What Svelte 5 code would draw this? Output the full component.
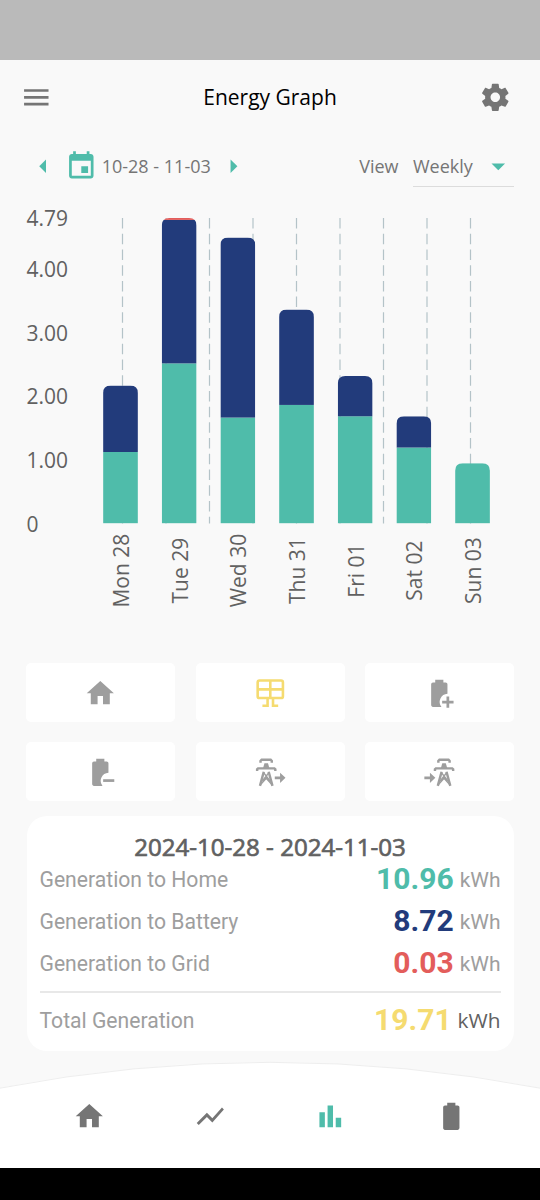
<script>
  const days = [
    { label: "Mon 28", home: 1.12, battery: 1.042, grid: 0 },
    { label: "Tue 29", home: 2.51, battery: 2.25, grid: 0.03 },
    { label: "Wed 30", home: 1.66, battery: 2.823, grid: 0 },
    { label: "Thu 31", home: 1.858, battery: 1.496, grid: 0 },
    { label: "Fri 01", home: 1.68, battery: 0.632, grid: 0 },
    { label: "Sat 02", home: 1.19, battery: 0.49, grid: 0 },
    { label: "Sun 03", home: 0.944, battery: 0, grid: 0 },
  ];

  const ticks = [
    { value: 4.79, label: "4.79" },
    { value: 4, label: "4.00" },
    { value: 3, label: "3.00" },
    { value: 2, label: "2.00" },
    { value: 1, label: "1.00" },
    { value: 0, label: "0" },
  ];

  const gridLines = Array.from({ length: 9 }, (_, i) => 122.5 + i * 43.5);

  const chartTop = 18;
  const chartBase = 323.4;
  const barWidth = 34.8;
  const maxValue = 4.79;

  const y = (value) => chartBase - (value / maxValue) * (chartBase - chartTop);
  const barX = (i) => 103.1 + i * 58.67;

  // stack the non-empty parts of a day from the axis upwards
  function segments(day) {
    let sum = 0;
    return ["home", "battery", "grid"]
      .filter((kind) => day[kind] > 0)
      .map((kind) => {
        const bottom = y(sum);
        sum += day[kind];
        return { kind, top: y(sum), height: bottom - y(sum) };
      });
  }

  const batteryCut =
    "M16.67 4H15V2H9V4H7.33A1.33 1.33 0 0 0 6 5.33V20.67C6 21.4 6.6 22 7.33 22H13.6A6 6 0 0 1 18 12.3V5.33C18 4.6 17.4 4 16.67 4Z";
  const homePath = "M10 20V14H14V20H19V12H22L12 3L2 12H5V20H10Z";

  const tiles = ["home", "solar", "battery-in", "battery-out", "grid-out", "grid-in"];
  let activeTile = $state("solar");

  const rows = [
    { label: "Generation to Home", value: "10.96", tone: "teal" },
    { label: "Generation to Battery", value: "8.72", tone: "navy" },
    { label: "Generation to Grid", value: "0.03", tone: "red" },
  ];

  const navItems = [
    { id: "home", path: homePath },
    { id: "trend", path: "M3.5 18.49l6-6.01 4 4L22 6.92l-1.41-1.41-7.09 7.97-4-4L2 16.99z" },
    { id: "graph", path: "M4 9h4v11H4zm12 4h4v7h-4zm-6-9h4v16h-4z" },
    {
      id: "battery",
      path: "M16.67 4H15V2H9V4H7.33A1.33 1.33 0 0 0 6 5.33V20.67C6 21.4 6.6 22 7.33 22H16.67A1.33 1.33 0 0 0 18 20.67V5.33C18 4.6 17.4 4 16.67 4Z",
    },
  ];
  let activeNav = $state("graph");
</script>

{#snippet tower()}
  <g fill="none" stroke="currentColor" stroke-width="1.8">
    <path d="M4.8 4.9V3.6L5.6 2.8H12.3L13.1 3.6V4.9" />
    <path d="M2.3 11V9.8L3 9.1H15L15.7 9.8V11" />
    <path d="M7.2 11.6L4.4 22M10.8 11.6L13.6 22" />
    <path d="M7.2 12.4L11.8 18.4M10.8 12.4L6.2 18.4M5 20.8L9 16.4L13 20.8" stroke-width="1.1" />
  </g>
  <path d="M7.7 5.3H10.3L11.3 8.9H6.7Z" />
{/snippet}

<div class="screen">
  <div class="status-bar"></div>

  <header class="top-bar">
    <button type="button" class="icon-btn" aria-label="Menu">
      <svg class="icon" viewBox="0 0 24 24"><path d="M3 18h18v-2H3v2zm0-5h18v-2H3v2zm0-7v2h18V6H3z" /></svg>
    </button>
    <h1>Energy Graph</h1>
    <button type="button" class="icon-btn" aria-label="Settings">
      <svg class="icon" viewBox="0 0 24 24">
        <path d="M19.43 12.98c.04-.32.07-.64.07-.98s-.03-.66-.07-.98l2.11-1.65c.19-.15.24-.42.12-.64l-2-3.46c-.12-.22-.39-.3-.61-.22l-2.49 1c-.52-.4-1.08-.73-1.69-.98l-.38-2.65C14.46 2.18 14.25 2 14 2h-4c-.25 0-.46.18-.49.42l-.38 2.65c-.61.25-1.17.59-1.69.98l-2.49-1c-.23-.09-.49 0-.61.22l-2 3.46c-.13.22-.07.49.12.64l2.11 1.65c-.04.32-.07.65-.07.98s.03.66.07.98l-2.11 1.65c-.19.15-.24.42-.12.64l2 3.46c.12.22.39.3.61.22l2.49-1c.52.4 1.08.73 1.69.98l.38 2.65c.03.24.24.42.49.42h4c.25 0 .46-.18.49-.42l.38-2.65c.61-.25 1.17-.59 1.69-.98l2.49 1c.23.09.49 0 .61-.22l2-3.46c.12-.22.07-.49-.12-.64l-2.11-1.65zM12 15.5c-1.93 0-3.5-1.57-3.5-3.5s1.57-3.5 3.5-3.5 3.5 1.57 3.5 3.5-1.57 3.5-3.5 3.5z" />
      </svg>
    </button>
  </header>

  <div class="toolbar">
    <div class="range">
      <button type="button" class="icon-btn" aria-label="Previous week">
        <svg class="icon" viewBox="0 0 24 24"><path d="M14 7l-5 5 5 5V7z" /></svg>
      </button>
      <svg class="icon calendar" viewBox="0 0 24 24">
        <path d="M17 12h-5v5h5v-5zM16 1v2H8V1H6v2H5c-1.11 0-1.99.9-1.99 2L3 19c0 1.1.89 2 2 2h14c1.1 0 2-.9 2-2V5c0-1.1-.9-2-2-2h-1V1h-2zm3 18H5V8h14v11z" />
      </svg>
      <span class="dates">10-28 - 11-03</span>
      <button type="button" class="icon-btn" aria-label="Next week">
        <svg class="icon" viewBox="0 0 24 24"><path d="M10 17l5-5-5-5v10z" /></svg>
      </button>
    </div>
    <div class="view">
      <span>View</span>
      <button type="button" class="select">
        <span>Weekly</span>
        <svg class="icon" viewBox="0 0 24 24"><path d="M7 10l5 5 5-5z" /></svg>
      </button>
    </div>
  </div>

  <svg class="chart" viewBox="0 0 540 420">
    {#each gridLines as x}
      <line class="grid-line" x1={x} x2={x} y1={chartTop} y2={chartBase} />
    {/each}
    {#each ticks as tick}
      <text x="26.5" y={y(tick.value) + 8.4}>{tick.label}</text>
    {/each}
    {#each days as day, i}
      <clipPath id="bar-{i}">
        <path d="M{barX(i)} {chartBase}V{y(day.home + day.battery + day.grid) + 7.5}q0 -7.5 7.5 -7.5h{barWidth - 15}q7.5 0 7.5 7.5V{chartBase}z" />
      </clipPath>
      <g clip-path="url(#bar-{i})">
        {#each segments(day) as seg}
          <rect class={seg.kind} x={barX(i)} y={seg.top} width={barWidth} height={seg.height} />
        {/each}
      </g>
      <text text-anchor="middle" transform="translate({barX(i) + 26} 370.6) rotate(-90)">{day.label}</text>
    {/each}
  </svg>

  <div class="tiles">
    {#each tiles as tile}
      <button type="button" class="tile" class:active={activeTile === tile} aria-label={tile} onclick={() => (activeTile = tile)}>
        <svg class="icon" viewBox="0 0 24 24">
          {#if tile === "home"}
            <path d={homePath} />
          {:else if tile === "solar"}
            <g fill="none" stroke="currentColor" stroke-width="1.9">
              <rect x="2.7" y="2.6" width="18.6" height="12.9" rx="1.4" />
              <path d="M12 2.6V15.5M2.7 9.1H21.3M10 15.5V21.2H6.2M14 15.5V21.2H17.8" />
            </g>
          {:else if tile === "battery-in"}
            <path d={batteryCut} />
            <path d="M17.3 14.3H19.3V17.5H22.5V19.5H19.3V22.7H17.3V19.5H14.1V17.5H17.3Z" />
          {:else if tile === "battery-out"}
            <path d={batteryCut} />
            <path d="M14.1 17.1H22.3V19.1H14.1Z" />
          {:else if tile === "grid-out"}
            {@render tower()}
            <path d="M15.3 15.1H19.2V12.3L23.2 16.1L19.2 19.9V17.1H15.3Z" />
          {:else}
            <g transform="translate(6.5 0)">{@render tower()}</g>
            <path d="M1 15.1H5.1V12.3L9.1 16.1L5.1 19.9V17.1H1Z" />
          {/if}
        </svg>
      </button>
    {/each}
  </div>

  <section class="card">
    <h2>2024-10-28 - 2024-11-03</h2>
    {#each rows as row}
      <div class="row">
        <span class="label">{row.label}</span>
        <span class="value {row.tone}">{row.value}</span>
        <span class="unit">kWh</span>
      </div>
    {/each}
    <div class="row total">
      <span class="label">Total Generation</span>
      <span class="value yellow">19.71</span>
      <span class="unit">kWh</span>
    </div>
  </section>

  <nav class="bottom-nav">
    <svg class="curve" viewBox="0 0 540 30" aria-hidden="true">
      <path d="M-2 28.5Q134 2.3 270 2.3T542 28.5V31H-2Z" />
    </svg>
    <div class="nav-items">
      {#each navItems as item}
        <button type="button" class="nav-btn" class:active={activeNav === item.id} aria-label={item.id} onclick={() => (activeNav = item.id)}>
          <svg class="icon" viewBox="0 0 24 24"><path d={item.path} /></svg>
        </button>
      {/each}
    </div>
  </nav>
  <div class="system-bar"></div>
</div>

<style>
  :global(body) {
    margin: 0;
    background: #f9f9f9;
  }

  .screen {
    display: flex;
    flex-direction: column;
    width: 540px;
    height: 1200px;
    overflow: hidden;
    background: #f9f9f9;
    color: #616161;
    font-family: "Open Sans", "Noto Sans", sans-serif;
  }

  button {
    margin: 0;
    padding: 0;
    border: none;
    background: none;
    color: inherit;
    font: inherit;
  }

  .icon {
    display: block;
    width: 32.6px;
    height: 32.6px;
    flex: none;
    fill: currentColor;
  }

  .status-bar {
    flex: none;
    height: 60.4px;
    background: #bababa;
  }

  .top-bar {
    display: flex;
    align-items: center;
    justify-content: space-between;
    flex: none;
    height: 73.6px;
    padding: 0 28.4px 0 20.4px;
    color: #757575;
  }

  h1 {
    margin: 0;
    padding-left: 8px;
    color: #000;
    font-size: 21px;
    font-weight: 400;
  }

  .toolbar {
    display: flex;
    align-items: center;
    justify-content: space-between;
    flex: none;
    height: 38px;
    padding: 13px 26.5px 1px;
    color: #757575;
    font-size: 18px;
  }

  .range {
    display: flex;
    align-items: center;
    color: #4fbcaa;
  }

  .calendar {
    margin-left: 5.5px;
  }

  .dates {
    width: 110px;
    margin: 0 5px 0 4.5px;
    color: #757575;
    white-space: nowrap;
  }

  .view {
    display: flex;
    align-items: center;
    gap: 14.5px;
  }

  .select {
    display: flex;
    align-items: center;
    justify-content: space-between;
    width: 100.5px;
    height: 42px;
    box-sizing: border-box;
    border-top: 1px solid transparent;
    border-bottom: 1px solid #dcdcdc;
  }

  .select .icon {
    color: #4fbcaa;
    margin-right: -1px;
  }

  .chart {
    display: block;
    flex: none;
    width: 540px;
    height: 420px;
    margin-top: 14px;
  }

  .chart text {
    fill: #616161;
    font-size: 21px;
  }

  .grid-line {
    stroke: #b4c3c8;
    stroke-width: 1.2;
    stroke-dasharray: 10.5 5.22;
  }

  .home {
    fill: #4fbcaa;
  }

  .battery {
    fill: #223b7b;
  }

  .grid {
    fill: #e35d5b;
  }

  .tiles {
    display: grid;
    grid-template-columns: repeat(3, 1fr);
    grid-auto-rows: 59px;
    gap: 20px 20.5px;
    flex: none;
    margin-top: 43px;
    padding: 0 26px;
  }

  .tile {
    display: flex;
    align-items: center;
    justify-content: center;
    padding: 1px 0 0 0.5px;
    border-radius: 5px;
    background: #fff;
    color: #9e9e9e;
  }

  .tile.active {
    color: #f5db70;
  }

  .card {
    flex: none;
    box-sizing: border-box;
    height: 235px;
    margin: 15px 26.5px 0;
    padding: 12px 13px 0;
    border-radius: 20px;
    background: #fff;
  }

  h2 {
    margin: 0;
    height: 30px;
    line-height: 37px;
    font-size: 24.1px;
    font-weight: 400;
    text-align: center;
    -webkit-text-stroke: 0.7px currentColor;
  }

  .row {
    display: flex;
    align-items: center;
    height: 42px;
    color: #9e9e9e;
    font-family: Roboto, sans-serif;
    font-size: 21px;
  }

  .label {
    flex: 1;
    padding-top: 1px;
    font-size: 21.15px;
  }

  .value {
    font-size: 30px;
    font-weight: 700;
  }

  .unit {
    margin-left: 6px;
    padding-top: 2px;
  }

  .teal {
    color: #4fbcaa;
  }

  .navy {
    color: #223b7b;
  }

  .red {
    color: #e35d5b;
  }

  .yellow {
    color: #f5db70;
  }

  .total {
    height: 54px;
    margin-top: 7px;
    border-top: 2px solid #e8e8e8;
  }

  .total .unit {
    padding-top: 0;
    color: #616161;
    font-family: "Open Sans", sans-serif;
    font-size: 20.8px;
  }

  .bottom-nav {
    display: flex;
    flex-direction: column;
    flex: none;
    margin-top: 9px;
  }

  .curve {
    display: block;
    width: 540px;
    height: 30px;
    fill: #fff;
    stroke: #eee;
    stroke-width: 1;
  }

  .nav-items {
    display: flex;
    justify-content: space-between;
    height: 78.3px;
    box-sizing: border-box;
    padding: 10px 72.6px 0 73px;
    background: #fff;
    color: #757575;
  }

  .nav-btn {
    height: 32.6px;
  }

  .nav-btn.active {
    color: #4fbcaa;
  }

  .system-bar {
    flex: 1;
    background: #000;
  }
</style>
